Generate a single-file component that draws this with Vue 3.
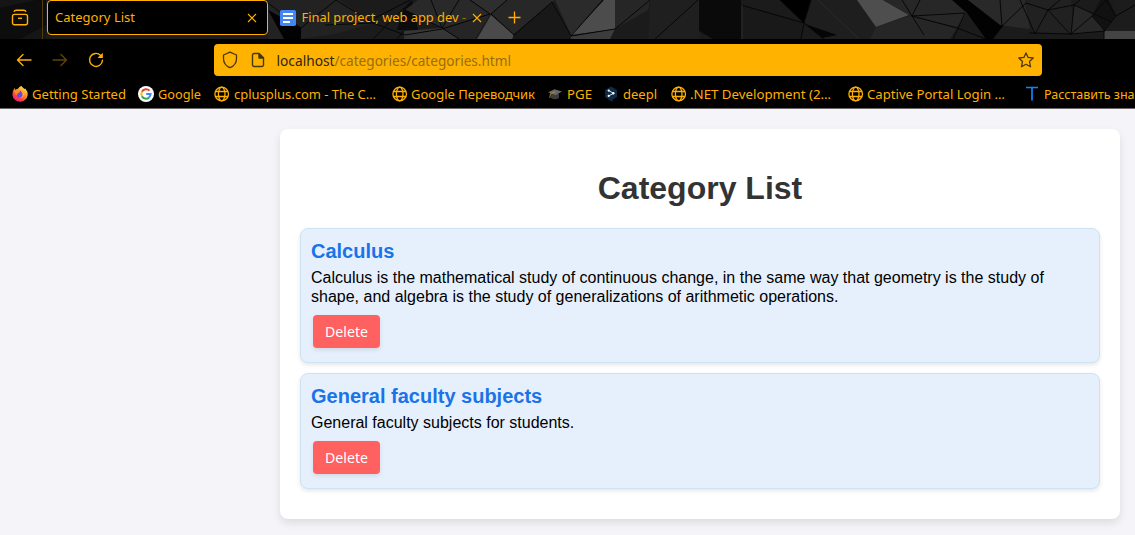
<script setup>
const bookmarks = [
  { icon: 'firefox', text: 'Getting Started', slot: 126, gap: 4, width: 94 },
  { icon: 'google', text: 'Google', slot: 76, gap: 4, width: 43 },
  { icon: 'globe', text: 'cplusplus.com - The C…', slot: 178, gap: 4, width: 142 },
  { icon: 'globe', text: 'Google Переводчик', slot: 155, gap: 3, width: 124 },
  { icon: 'cap', text: 'PGE', slot: 56, gap: 4, width: 25 },
  { icon: 'deepl', text: 'deepl', slot: 68, gap: 4, width: 34 },
  { icon: 'globe', text: '.NET Development (2…', slot: 177, gap: 3, width: 141 },
  { icon: 'globe', text: 'Captive Portal Login …', slot: 176, gap: 3, width: 138 },
  { icon: 'letter', text: 'Расставить зна', slot: 111, gap: 4, width: 90.5 },
]
const categories = [
  {
    name: 'Calculus',
    description:
      'Calculus is the mathematical study of continuous change, in the same way that geometry is the study of shape, and algebra is the study of generalizations of arithmetic operations.',
  },
  { name: 'General faculty subjects', description: 'General faculty subjects for students.' },
]
</script>

<template>
  <div class="window">
    <div class="tabs">
      <svg class="backdrop" width="1135" height="39" viewBox="0 0 1135 39">
        <rect width="1135" height="39" fill="#1b1b1b" />
        <rect width="46" height="39" fill="#0d0d0d" />
        <path d="M0 8 36 0H0ZM20 39 46 25V39Z" fill="#151515" />
        <path d="M268 0H340L373 23 336 34 300 39H268Z" fill="#222" />
        <path d="M268 10 301 28V39H284Z" fill="#020202" />
        <path d="M404 8 412 0 418 30 397 30Z" fill="#0b0b0b" />
        <path d="M418 0H470L490 14 442 28 405 10Z" fill="#292929" />
        <path d="M404 31 442 28 459 39H404Z" fill="#363636" />
        <path d="M442 28 490 14 475 39H459Z" fill="#252525" />
        <path d="M470 0H507L491 14Z" fill="#2e2e2e" />
        <path d="M507 0H555L513 35 491 14Z" fill="#272727" />
        <path d="M491 15 514 35 512 39H477Z" fill="#4a4a4a" />
        <path d="M513 35 552 2 571 39H514Z" fill="#181818" />
        <path d="M555 0H602L571 35Z" fill="#2b2b2b" />
        <path d="M604 0H615V29L571 35Z" fill="#4c4c4c" />
        <path d="M571 36 615 29 610 39H571Z" fill="#3c3c3c" />
        <path d="M615 0H650L648 10 615 29Z" fill="#262626" />
        <path d="M650 0H700V39H648Z" fill="#1f1f1f" />
        <path d="M699 0H741V39H713L699 31Z" fill="#0a0a0a" />
        <path d="M741 5 803 22 801 39H742Z" fill="#191919" />
        <path d="M780 0H811L804 23Z" fill="#000" />
        <path d="M811 0H861L876 27 870 39H822L804 22Z" fill="#1e1e1e" />
        <path d="M805 24 837 35 822 38Z" fill="#050505" />
        <path d="M857 0H883L909 15 876 27Z" fill="#4e4e4e" />
        <path d="M883 0H953L967 13 957 27 911 16Z" fill="#272727" />
        <path d="M909 16 957 28 950 39H870L876 27Z" fill="#262626" />
        <path d="M952 0H968L1003 26 993 39H986L967 13Z" fill="#020202" />
        <path d="M968 0H1025L1030 29 1000 25Z" fill="#292929" />
        <path d="M1025 0H1071L1074 34 1032 32Z" fill="#212121" />
        <path d="M1074 5 1096 16 1104 31 1071 34Z" fill="#272727" />
        <path d="M1100 0H1109L1116 16 1105 30 1092 16Z" fill="#111" />
        <path d="M1112 0H1135V31L1105 31 1116 16Z" fill="#1c1c1c" />
        <path d="M1104 31H1135V39H1104Z" fill="#444" />
        <path
          d="M268 3 301 28 336 0M325 25 373 23 405 35 442 29 490 14 470 0M336 0 373 23M375 18 410 0M373 39 404 8M405 10 442 28 431 0M404 31 397 39M442 28 459 39M442 28 459 0M491 14 507 0M491 14 514 35 552 2 571 36 615 29M571 36 603 0M615 29 650 0M655 39 698 0M741 5 804 23 780 0M804 23 824 39M811 0 804 23 801 39M902 0 912 16 957 28 986 39M920 0 912 16 965 13M912 16 924 35M965 13 953 39M1000 0 1002 26 1026 3 1048 10 1074 5 1112 22M1020 0 1035 34 1048 10 1071 35 1074 5 1080 0M1048 10 1060 0M1029 33 1071 34 1105 31 1092 16 1071 34M1092 16 1106 0 1116 16 1104 31V39M1116 16 1135 5"
          fill="none" stroke="#070707" stroke-width="1" />
        <path d="M818 0 858 38M742 5V39" fill="none" stroke="#303030" stroke-width=".8" />
      </svg>
      <div class="tab-row">
        <div class="recent">
          <svg width="18" height="18" viewBox="0 0 18 18" fill="none" stroke="#ffb000" stroke-width="1.4">
            <path d="M3 2.800Q3.500 1.200 5.200 1.200H12.800Q14.500 1.200 15 2.800" />
            <rect x="1.500" y="5.400" width="15" height="10.400" rx="2" />
            <path d="M7 9.300H11" />
          </svg>
        </div>
        <div class="tab active">
          <svg class="label" width="80" height="20"><text x="0" y="14" textLength="80" lengthAdjust="spacingAndGlyphs">Category List</text></svg>
          <svg width="10" height="10" viewBox="0 0 10 10" stroke="#ffb000" stroke-width="1.1"><path d="M1 1 9 9M9 1 1 9" /></svg>
        </div>
        <div class="tab other">
          <svg width="16" height="16" viewBox="0 0 16 16"><rect width="16" height="16" rx="1.8" fill="#4285f4" /><path d="M3 4H13M3 8H13M3 12H10" stroke="#fff" stroke-width="2" /></svg>
          <svg class="label" width="166" height="20"><text x="0.5" y="14" textLength="157" lengthAdjust="spacingAndGlyphs">Final project, web app dev</text><text x="161" y="14" textLength="4" lengthAdjust="spacingAndGlyphs" opacity=".55">-</text></svg>
          <svg width="10" height="10" viewBox="0 0 10 10" stroke="#ffb000" stroke-width="1.1"><path d="M1 1 9 9M9 1 1 9" /></svg>
        </div>
        <svg class="plus" width="13" height="13" viewBox="0 0 13 13" stroke="#ffb000" stroke-width="1.3"><path d="M6.5 .5V12.5M.5 6.5H12.5" /></svg>
      </div>
    </div>

    <div class="nav">
      <div class="controls">
        <svg width="16" height="16" viewBox="0 0 16 16" fill="none" stroke="#ffb000" stroke-width="1.4" stroke-linecap="round" stroke-linejoin="round"><path d="M15 8H1.8M7 2.5 1.5 8 7 13.5" /></svg>
        <svg width="16" height="16" viewBox="0 0 16 16" fill="none" stroke="#624400" stroke-width="1.4" stroke-linecap="round" stroke-linejoin="round"><path d="M1 8H14.2M9 2.5 14.5 8 9 13.5" /></svg>
        <svg width="16" height="16" viewBox="0 0 16 16" fill="none" stroke="#ffb000" stroke-width="1.4"><path d="M12.5 3.2A6.5 6.5 0 1 0 14.5 8.3" stroke-linecap="round" /><path d="M14.8 .7V6H9.5Z" fill="#ffb000" stroke="none" /></svg>
      </div>
      <div class="address">
        <svg width="16" height="18" viewBox="0 0 16 18" fill="none" stroke="#48380f" stroke-width="1.3" stroke-linejoin="round"><path d="M8 1.2 14.5 4V7.5C14.5 12 11.5 15.3 8 16.7 4.500 15.300 1.500 12 1.500 7.500V4Z" /></svg>
        <svg class="page-icon" width="14" height="16" viewBox="0 0 14 16" fill="none" stroke="#48380f" stroke-width="1.4" stroke-linejoin="round"><path d="M3 1.500H8L12.500 6V13A1.500 1.500 0 0 1 11 14.500H3A1.500 1.500 0 0 1 1.500 13V3A1.500 1.500 0 0 1 3 1.500Z" /><path d="M8 1.500V6H12.500Z" fill="#48380f" /></svg>
        <svg class="label url" width="240" height="22"><text x="-0.5" y="17" textLength="58" lengthAdjust="spacingAndGlyphs" fill="#2b2618">localhost</text><text x="57.500" y="17" textLength="176.500" lengthAdjust="spacingAndGlyphs" fill="#966d12">/categories/categories.html</text></svg>
        <svg class="star" width="16" height="16" viewBox="0 0 16 16" fill="none" stroke="#48380f" stroke-width="1.3" stroke-linejoin="round"><path d="M8 .9 10.100 5.400 15.200 6 11.500 9.500 12.500 14.800 8 12.300 3.500 14.800 4.500 9.500 .8 6 5.900 5.400Z" /></svg>
      </div>
    </div>

    <div class="bookmarks">
      <div v-for="b in bookmarks" :key="b.text" class="bookmark" :style="{ width: b.slot + 'px', gap: b.gap + 'px' }">
        <svg v-if="b.icon === 'globe'" width="16" height="16" viewBox="0 0 16 16" fill="none" stroke="#ffb000" stroke-width="1.3"><circle cx="7.700" cy="8" r="6.800" /><ellipse cx="7.700" cy="8" rx="3.300" ry="6.800" /><path d="M1.500 5.500H13.900M1.500 10.500H13.900" /></svg>
        <svg v-else-if="b.icon === 'firefox'" width="16" height="16" viewBox="0 0 16 16">
          <defs>
            <linearGradient id="flame" x1=".85" y1="0" x2=".2" y2="1"><stop offset="0" stop-color="#fff044" /><stop offset=".4" stop-color="#ff9a22" /><stop offset=".7" stop-color="#ff4540" /><stop offset="1" stop-color="#e31587" /></linearGradient>
          </defs>
          <path d="M9.500 0Q11 2 12.500 3L13.300 2.500Q16 5.500 15.700 9A7.700 7.700 0 0 1 .4 9Q0 5 2.700 2L3.500 4Q4.500 2.700 6 2.700Q7.500 0 9.500 0Z" fill="url(#flame)" />
          <circle cx="8" cy="8.300" r="3.500" fill="#7542e5" />
          <path d="M2.500 5Q5.500 3.200 8.300 5.500Q7.700 6.800 6 7Q4.800 8.200 5 9.500Q2.500 8 2.500 5Z" fill="#ff8a20" />
          <path d="M8.500 4.500Q12.500 5 12 9Q11 12.500 7.500 12Q11 11 10.500 8Q10 5.800 8.500 4.500Z" fill="#ffb22c" />
        </svg>
        <svg v-else-if="b.icon === 'google'" width="16" height="16" viewBox="0 0 16 16" fill="none" stroke-width="2">
          <circle cx="8" cy="8" r="8" fill="#fff" />
          <path d="M11.500 4.600A4.700 4.700 0 0 0 3.900 5.800" stroke="#ea4335" />
          <path d="M3.900 5.700A4.700 4.700 0 0 0 3.900 10.300" stroke="#fbbc05" />
          <path d="M3.900 10.200A4.700 4.700 0 0 0 11 11.600" stroke="#34a853" />
          <path d="M10.900 11.600A4.700 4.700 0 0 0 12.600 8H8.200" stroke="#4285f4" />
        </svg>
        <svg v-else-if="b.icon === 'cap'" width="16" height="16" viewBox="0 0 16 16"><path d="M4 8V12Q8 14.500 12 12V8Z" fill="#3b3b3b" /><path d="M1 6.300 7.500 3.200 15 5.500 8.600 9.200Z" fill="#65676a" /><path d="M8 6 3.500 7.500 2.800 12" stroke="#b98d32" stroke-width=".9" fill="none" /></svg>
        <svg v-else-if="b.icon === 'deepl'" width="16" height="16" viewBox="0 0 16 16"><path d="M8 .5 14 4V11L9.500 13.700V16L7 14.500 2 11V4Z" fill="#0f2b46" /><path d="M5.500 4.500 10.500 7.300 5.500 10" stroke="#d8e3ed" stroke-width="1" fill="none" /><g fill="#fff"><circle cx="5.700" cy="4.600" r="1.100" /><circle cx="10.300" cy="7.200" r="1.200" /><circle cx="5.700" cy="9.900" r="1.100" /></g></svg>
        <svg v-else width="16" height="16" viewBox="0 0 16 16" fill="none" stroke="#1482ff" stroke-width="1.700"><path d="M2 1.500H14M8 1.500V14.500" /></svg>
        <svg class="label" :width="b.width" height="20"><text x="0" y="15" :textLength="b.width" lengthAdjust="spacingAndGlyphs">{{ b.text }}</text></svg>
      </div>
    </div>

    <main class="page">
      <section class="panel">
        <h1>Category List</h1>
        <ul>
          <li v-for="c in categories" :key="c.name">
            <h2>{{ c.name }}</h2>
            <p>{{ c.description }}</p>
            <button type="button"><svg class="label" width="43" height="20"><text x="0" y="15" textLength="43" lengthAdjust="spacingAndGlyphs">Delete</text></svg></button>
          </li>
        </ul>
      </section>
    </main>
  </div>
</template>

<style>
body { margin: 0; background: #f4f4f9; overflow: hidden; }
</style>

<style scoped>
* { box-sizing: border-box; }
svg { display: block; flex: none; }
.window { width: 1135px; height: 535px; overflow: hidden; display: flex; flex-direction: column; font-family: "Liberation Sans", Arial, sans-serif; background: #f4f4f9; }
.label { overflow: visible; font-family: "Noto Sans", "Open Sans", sans-serif; font-size: 13px; fill: #ffb000; }
.tabs { position: relative; height: 39px; flex: none; }
.backdrop { position: absolute; inset: 0; }
.tab-row { position: relative; display: flex; height: 39px; }
.recent { width: 43px; height: 39px; padding: 9px 0 0 11px; border-right: 1px solid #543b05; }
.tab { display: flex; align-items: center; height: 35px; }
.active { width: 221px; margin-left: 4px; padding: 0 10px 0 7px; justify-content: space-between; background: #000; border: 1px solid #ffb000; border-radius: 4px; }
.other { margin-left: 12px; gap: 5px; }
.plus { margin: 11px 0 0 26px; }
.nav { display: flex; align-items: center; height: 41px; padding-top: 1px; background: #000; flex: none; }
.controls { display: flex; gap: 20px; width: 198px; margin-left: 16px; }
.address { display: flex; align-items: center; width: 828px; height: 32px; padding: 0 8px; background: #ffb300; border-radius: 4px; }
.page-icon { margin-left: 13px; }
.url { margin-left: 12px; font-size: 14px; }
.star { margin-left: auto; }
.bookmarks { display: flex; align-items: center; height: 29px; padding-left: 12px; background: #000; border-bottom: 1px solid #6c6769; flex: none; overflow: hidden; }
.bookmark { display: flex; align-items: center; flex: none; }
.page { padding: 20px 15px 0 280px; flex: 1; }
.panel { height: 390px; padding: 20px; background: #fff; border-radius: 8px; box-shadow: 0 4px 8px rgba(0, 0, 0, .1); }
h1 { margin: 20px 0 21px; font-size: 32px; line-height: 38px; text-align: center; color: #333; }
ul { margin: 0; padding: 0; list-style: none; display: grid; gap: 10px; }
li { padding: 11px 10px 14px; background: #e6f0fd; border: 1px solid #cfe2f3; border-radius: 8px; box-shadow: 0 2px 4px rgba(0, 0, 0, .1); }
h2 { margin: 0 0 5px; font-size: 20px; line-height: 23px; color: #1a73e8; }
p { margin: 0 0 9px; font-size: 16px; line-height: 19px; color: #000; }
button { display: flex; align-items: center; justify-content: center; width: 67px; height: 33px; margin-left: 2px; padding: 0; border: 0; border-radius: 4px; background: #ff6060; box-shadow: 0 2px 4px rgba(0, 0, 0, .1); }
button .label { fill: #fff; font-size: 14px; }
</style>
